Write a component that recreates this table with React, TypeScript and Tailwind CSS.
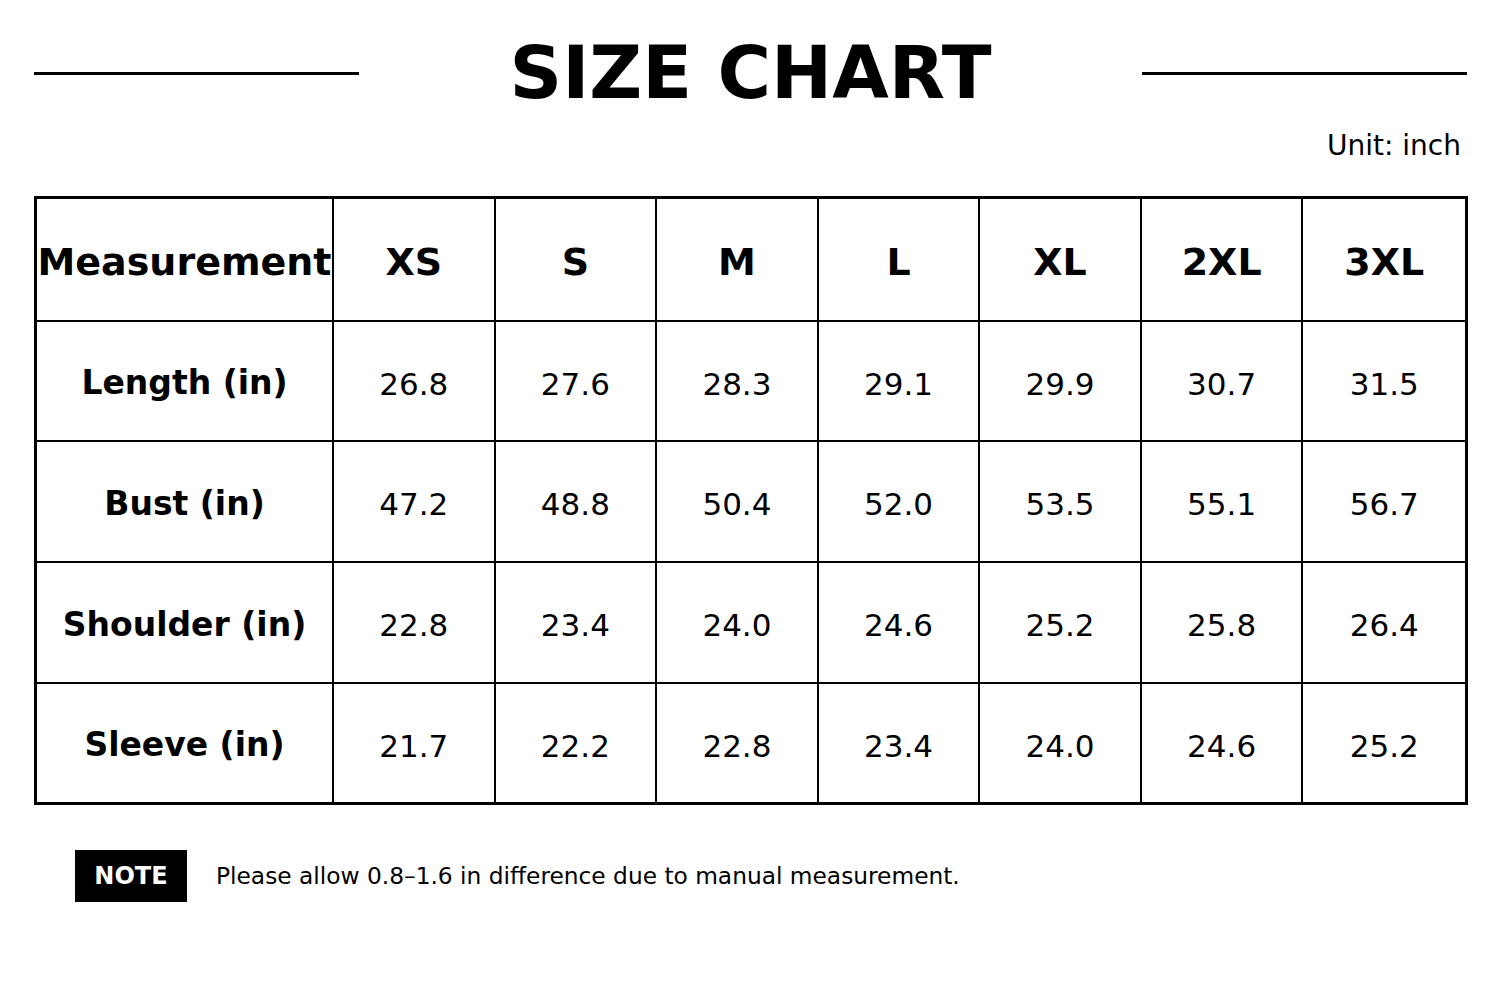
const sizes = ["XS", "S", "M", "L", "XL", "2XL", "3XL"];

const rows: { label: string; values: string[] }[] = [
  { label: "Length (in)", values: ["26.8", "27.6", "28.3", "29.1", "29.9", "30.7", "31.5"] },
  { label: "Bust (in)", values: ["47.2", "48.8", "50.4", "52.0", "53.5", "55.1", "56.7"] },
  { label: "Shoulder (in)", values: ["22.8", "23.4", "24.0", "24.6", "25.2", "25.8", "26.4"] },
  { label: "Sleeve (in)", values: ["21.7", "22.2", "22.8", "23.4", "24.0", "24.6", "25.2"] },
];

// row heights include the bottom rule; the last row has none
const rowHeights = ["h-[120px]", "h-[121px]", "h-[121px]", "h-[118px]"];

export default function App() {
  return (
    <div className="min-h-[983px] w-[1500px] bg-white text-black font-['DejaVu_Sans',sans-serif]">
      {/* Title with side rules */}
      <div className="flex items-center pl-[34px] pr-[33px] pt-[30px]">
        <div className="h-[3px] w-[325px] bg-black" />
        <h1 className="flex-1 text-center text-[73px] font-bold leading-[86px]">SIZE CHART</h1>
        <div className="h-[3px] w-[325px] bg-black" />
      </div>

      <div className="flex justify-end pr-[39px] pt-[14px] text-[28px] leading-[32px]">Unit: inch</div>

      {/* Table */}
      <div className="ml-[34px] mt-[34px] w-[1434px] border-[3px] border-black">
        <div className="grid grid-cols-[297px_repeat(7,1fr)]">
          <div className="flex h-[123px] items-center justify-center border-b-2 border-r-2 border-black pt-[6px] text-[38px] font-bold">
            Measurement
          </div>
          {sizes.map((s, i) => (
            <div
              key={s}
              className={
                "flex h-[123px] items-center justify-center border-b-2 border-black pt-[6px] text-[38px] font-bold " +
                (i < sizes.length - 1 ? "border-r-2" : "")
              }
            >
              {s}
            </div>
          ))}
          {rows.map((r, ri) => (
            <div key={r.label} className="contents">
              <div
                className={
                  "flex items-center justify-center border-r-2 border-black pt-[4px] text-[33px] font-bold " +
                  rowHeights[ri] +
                  (ri < rows.length - 1 ? " border-b-2" : "")
                }
              >
                {r.label}
              </div>
              {r.values.map((v, i) => (
                <div
                  key={i}
                  className={
                    "flex items-center justify-center border-black pt-[6px] text-[31px] " +
                    rowHeights[ri] +
                    (i < r.values.length - 1 ? " border-r-2" : "") +
                    (ri < rows.length - 1 ? " border-b-2" : "")
                  }
                >
                  {v}
                </div>
              ))}
            </div>
          ))}
        </div>
      </div>

      {/* Note */}
      <div className="flex items-center pl-[75px] pt-[45px]">
        <div className="flex h-[52px] w-[112px] items-center justify-center bg-black text-[24px] font-bold text-white">
          NOTE
        </div>
        <p className="ml-[29px] text-[23.3px]">Please allow 0.8–1.6 in difference due to manual measurement.</p>
      </div>
    </div>
  );
}
